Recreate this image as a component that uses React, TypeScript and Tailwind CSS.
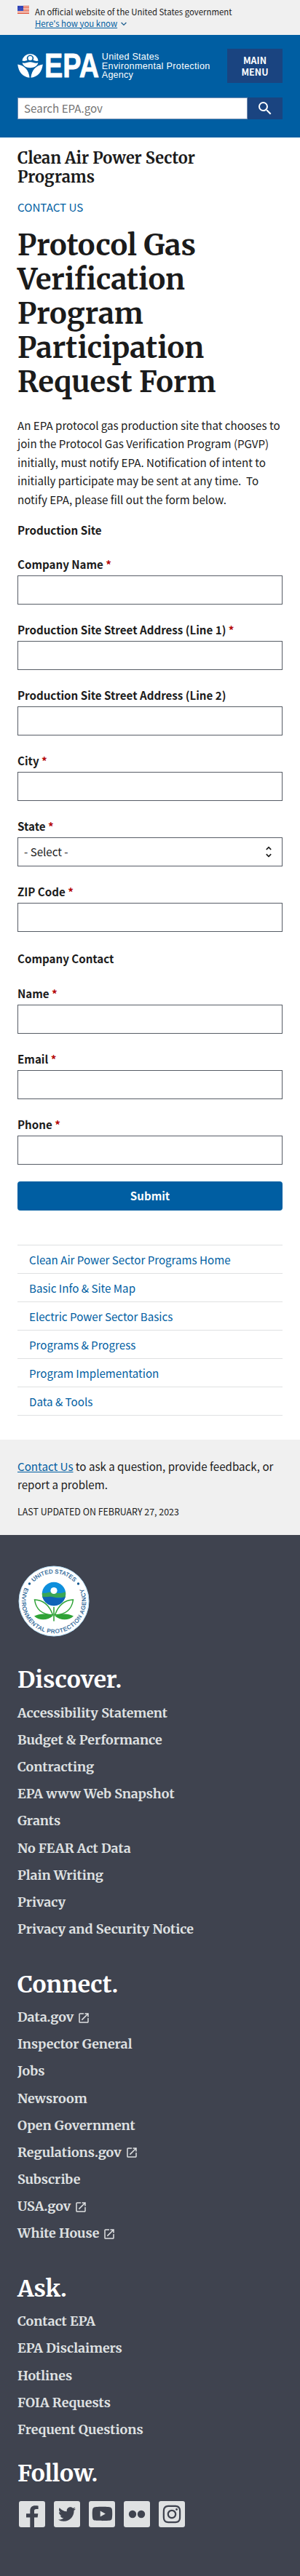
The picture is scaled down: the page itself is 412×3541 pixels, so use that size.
import type { ReactNode } from "react";
import { MdLaunch, MdSearch } from "react-icons/md";
import { FaInstagram, FaTwitter, FaYoutube } from "react-icons/fa";

const siteFields = ["Company Name", "Production Site Street Address (Line 1)", "Production Site Street Address (Line 2)", "City"];
const contactFields = ["Name", "Email", "Phone"];

const sections = [
  "Clean Air Power Sector Programs Home",
  "Basic Info & Site Map",
  "Electric Power Sector Basics",
  "Programs & Progress",
  "Program Implementation",
  "Data & Tools",
];

const discover = [
  "Accessibility Statement",
  "Budget & Performance",
  "Contracting",
  "EPA www Web Snapshot",
  "Grants",
  "No FEAR Act Data",
  "Plain Writing",
  "Privacy",
  "Privacy and Security Notice",
];
const connect = [
  "Data.gov",
  "Inspector General",
  "Jobs",
  "Newsroom",
  "Open Government",
  "Regulations.gov",
  "Subscribe",
  "USA.gov",
  "White House",
];
const external = ["Data.gov", "Regulations.gov", "USA.gov", "White House"];
const ask = ["Contact EPA", "EPA Disclaimers", "Hotlines", "FOIA Requests", "Frequent Questions"];

function Flag() {
  return (
    <svg width="16" height="11" viewBox="0 0 16 11" className="mt-2 block shrink-0">
      <rect width="16" height="11" fill="#fff" />
      {[0, 2, 4, 6, 8, 10].map((y) => (
        <rect key={y} y={y} width="16" height="1" fill="#db3e1f" />
      ))}
      <rect width="8" height="7" fill="#1e33b1" />
      {[1, 3, 5].map((y) =>
        [1, 3, 5, 7].map((x) => <circle key={`${x}-${y}`} cx={x - (y === 3 ? 0 : 0.2)} cy={y + 0.4} r="0.45" fill="#fff" />),
      )}
    </svg>
  );
}

function Logo() {
  return (
    <svg width="270" height="40" viewBox="24 70 270 40" className="block" fill="#fff">
      <path d="M30.4 83.6A11.2 11.2 0 0 1 52.6 83.6C49.5 84.6 47.5 83.4 45.4 82.6A4.6 4.6 0 1 0 37.6 82.6C35.4 84.2 33 84.4 30.4 83.6Z" />
      <circle cx="41.5" cy="80" r="3" />
      <path d="M30.6 86.3C35 87.6 38 85 41.6 85.2S48 87.4 52.4 86.3C51.2 91 46.8 93.2 41.5 93.2S31.8 91 30.6 86.3Z" />
      <path d="M24.2 88.4C33 89.6 39.6 95.6 40.6 106.8C31.6 105.6 25.6 99.6 24.2 88.4Z" />
      <path d="M58.8 88.4C50 89.6 43.4 95.6 42.4 106.8C51.4 105.6 57.4 99.6 58.8 88.4Z" />
      <text
        x="61"
        y="106.3"
        fontSize="46.5"
        fontWeight="700"
        textLength="75"
        lengthAdjust="spacingAndGlyphs"
        stroke="#fff"
        strokeWidth="0.8"
        fontFamily="'Liberation Sans', Arial, sans-serif"
      >
        EPA
      </text>
      <g fontSize="12.6" fontFamily="'Liberation Sans', Arial, sans-serif">
        <text x="139.8" y="82" textLength="78.5" lengthAdjust="spacing">United States</text>
        <text x="139.8" y="94.5" textLength="148.5" lengthAdjust="spacing">Environmental Protection</text>
        <text x="139.8" y="107" textLength="43" lengthAdjust="spacing">Agency</text>
      </g>
    </svg>
  );
}

function Seal() {
  return (
    <svg width="100" height="100" viewBox="0 0 100 100" className="block">
      <defs>
        <path id="seal-top" d="M11.7 50A38.3 38.3 0 0 1 88.3 50" />
        <path id="seal-bottom" d="M10.2 31.3A44 44 0 1 0 89.8 31.3" />
        <clipPath id="seal-disc">
          <circle cx="50" cy="40" r="16.2" />
        </clipPath>
      </defs>
      <circle cx="50" cy="50" r="48" fill="#fff" stroke="#b9e2fb" strokeWidth="1" />
      <g fill="#15588f" fontSize="7.8" fontFamily="'Liberation Sans', Arial, sans-serif" stroke="#15588f" strokeWidth="0.2">
        <text textAnchor="middle">
          <textPath href="#seal-top" startOffset="50%" textLength="62">UNITED STATES</textPath>
        </text>
        <text>
          <textPath href="#seal-bottom" textLength="175">ENVIRONMENTAL PROTECTION AGENCY</textPath>
        </text>
      </g>
      <circle cx="16.5" cy="26" r="1.7" fill="#15588f" />
      <circle cx="83.5" cy="26" r="1.7" fill="#15588f" />
      <g clipPath="url(#seal-disc)">
        <rect x="33" y="23" width="34" height="34" fill="#0e8fdc" />
        <path d="M33 38c6 3 10-2 17 0s11 1 17-1v8H33z" fill="#3aa655" />
        <path d="M33 43.5c6 2 10-1 17 1s11 1 17-1V58H33z" fill="#0f63b8" />
        <circle cx="50" cy="35.5" r="4.6" fill="#fff" />
      </g>
      <path d="M23.5 48C36 48.5 44 56 48.5 69C35 68.5 25.5 62 23.5 48Z" fill="#fff" stroke="#2fa336" strokeWidth="1.5" />
      <path d="M76.5 48C64 48.5 56 56 51.5 69C65 68.5 74.5 62 76.5 48Z" fill="#fff" stroke="#2fa336" strokeWidth="1.5" />
      <path d="M23 70.5C31 66.5 40 66.5 49 70C42 76 31 78 23 70.5Z" fill="#2fa336" />
      <path d="M77 70.5C69 66.5 60 66.5 51 70C58 76 69 78 77 70.5Z" fill="#2fa336" />
      <path d="M50 58V77.5" stroke="#2fa336" strokeWidth="1.6" />
    </svg>
  );
}

function Label({ text, required = true }: { text: string; required?: boolean }) {
  return (
    <label className="block h-[28px] leading-[24px] font-bold">
      {text} {required && <span className="text-[#b50909]">*</span>}
    </label>
  );
}

function Field({ text, required = true }: { text: string; required?: boolean }) {
  return (
    <div className="mt-[22px]">
      <Label text={text} required={required} />
      <input type="text" aria-label={text} className="block h-[40px] w-full border border-[#565c65] bg-white px-2 outline-none" />
    </div>
  );
}

function FooterList({ title, items }: { title: string; items: string[] }) {
  return (
    <section>
      <h2 className="pt-[0.6px] text-[31.8px] leading-[38px] font-bold text-white">{title}</h2>
      <ul className="pt-[7.4px]">
        {items.map((item) => (
          <li key={item} className="flex h-[37.2px] items-center text-[17.87px] leading-[37.2px] font-bold text-[#dfe1e2]">
            {item}
            {external.includes(item) && <MdLaunch className="mt-[2px] ml-[5px] size-[18px]" />}
          </li>
        ))}
      </ul>
    </section>
  );
}

function Social({ label, children }: { label: string; children: ReactNode }) {
  return (
    <a
      aria-label={label}
      className="flex size-[36px] items-center justify-center overflow-hidden rounded-[3px] bg-[#dfe1e2] text-[#3f434f]"
    >
      {children}
    </a>
  );
}

export default function App() {
  return (
    <div className="flex h-[3541px] w-full flex-col bg-white font-['Noto_Sans_CJK_SC','Noto_Sans',sans-serif] text-[15.13px] leading-[25.44px] text-[#1b1b1b]">
      <div className="flex h-[48px] shrink-0 gap-2 bg-[#f0f0f0] pl-6 text-[11.42px] leading-[16px]">
        <Flag />
        <div className="pt-[7.5px]">
          <p>An official website of the United States government</p>
          <p className="flex items-center text-[#005ea2]">
            <span className="underline">Here's how you know</span>
            <svg width="8" height="6" viewBox="0 0 8 6" className="mt-[2px] ml-[5px]" fill="none" stroke="#1f5f8f" strokeWidth="1.3">
              <path d="M0.6 1L4 4.4L7.4 1" />
            </svg>
          </p>
        </div>
      </div>

      <header className="flex h-[141px] shrink-0 flex-col bg-[#005ea2] px-6 pt-[19px]">
        <div className="flex h-[47px] justify-between">
          <div className="w-[270px] pt-[3px]">
            <Logo />
          </div>
          <button className="h-[47px] w-[76px] shrink-0 bg-[#1a4480] text-center text-[12.5px] leading-[16px] font-bold text-white">
            MAIN
            <br />
            MENU
          </button>
        </div>
        <div className="mt-[20px] flex h-[30px]">
          <div className="flex w-[316px] items-center border border-[#1a4480]/60 bg-white pl-[8px] text-[#757575]">Search EPA.gov</div>
          <button aria-label="Search" className="flex w-[48px] items-center justify-center bg-[#1a4480] text-white">
            <MdSearch className="size-[24px]" />
          </button>
        </div>
      </header>

      <main className="h-[1790px] shrink-0 px-6 pt-4">
        <h2 className="font-['Merriweather','DejaVu_Serif_Condensed',serif] text-[21.76px] leading-[26px] font-bold">
          Clean Air Power Sector
          <br />
          Programs
        </h2>
        <a className="mt-[15px] block leading-[24px] text-[#005ea2]">CONTACT US</a>
        <h1 className="mt-[18px] font-['Merriweather','DejaVu_Serif_Condensed',serif] text-[39.7px] leading-[47px] font-bold">
          Protocol Gas
          <br />
          Verification
          <br />
          Program
          <br />
          Participation
          <br />
          Request Form
        </h1>
        <p className="mt-[23px] whitespace-nowrap">
          An EPA protocol gas production site that chooses to
          <br />
          join the Protocol Gas Verification Program (PGVP)
          <br />
          initially, must notify EPA. Notification of intent to
          <br />
          initially participate may be sent at any time.&nbsp; To
          <br />
          notify EPA, please fill out the form below.
        </p>
        <form>
          <p className="mt-[16.4px] font-bold">Production Site</p>
          {siteFields.map((f) => (
            <Field key={f} text={f} required={!f.includes("Line 2")} />
          ))}
          <div className="mt-[22px]">
            <Label text="State" />
            <div className="flex h-[40px] items-center justify-between border border-[#565c65] pr-[14px] pl-[8px]">
              <span>- Select -</span>
              <svg width="8" height="16" viewBox="0 0 8 16" fill="none" stroke="#1b1b1b" strokeWidth="1.7">
                <path d="M0.8 4.8L4 1.7L7.2 4.8M0.8 11.2L4 14.3L7.2 11.2" />
              </svg>
            </div>
          </div>
          <Field text="ZIP Code" />
          <p className="mt-[24.2px] font-bold">Company Contact</p>
          {contactFields.map((f) => (
            <Field key={f} text={f} />
          ))}
          <button type="button" className="mt-[23.5px] block h-[39.5px] w-full rounded-[4px] bg-[#005ea2] text-center font-bold text-white">
            Submit
          </button>
        </form>
        <ul className="mt-[47.5px] border-b border-[#dfe1e2]">
          {sections.map((s) => (
            <li key={s} className="h-[39px] border-t border-[#dfe1e2] pl-4 leading-[38px] text-[#005ea2]">
              {s}
            </li>
          ))}
        </ul>
      </main>

      <div className="h-[131px] shrink-0 bg-[#f0f0f0] px-6 pt-[23.7px]">
        <p className="whitespace-nowrap">
          <a className="text-[#005ea2] underline">Contact Us</a> to ask a question, provide feedback, or
          <br />
          report a problem.
        </p>
        <p className="mt-[14px] text-[12.41px] leading-[20px]">LAST UPDATED ON FEBRUARY 27, 2023</p>
      </div>

      <footer className="flex-1 bg-[#3f434f] px-6 pt-[41px] font-['Merriweather','DejaVu_Serif_Condensed',serif]">
        <Seal />
        <div className="flex flex-col gap-[37.6px] pt-[38.7px]">
          <FooterList title="Discover." items={discover} />
          <FooterList title="Connect." items={connect} />
          <FooterList title="Ask." items={ask} />
        </div>
        <h2 className="mt-[23px] text-[31.8px] leading-[38px] font-bold text-white">Follow.</h2>
        <div className="mt-[18.6px] flex gap-3 pl-[2px]">
          <Social label="Facebook">
            <svg width="36" height="36" viewBox="0 0 36 36" fill="currentColor">
              <path d="M15.3 36V22.4H10V17.2H15.3V13.2C15.3 8.800 18 6.200 22.200 6.200C24.200 6.200 26 6.400 26.600 6.500V11H23.900C21.700 11 21 12.100 21 13.700V17.200H26.300L25.600 22.400H21V36Z" />
            </svg>
          </Social>
          <Social label="Twitter">
            <FaTwitter className="size-[24px]" />
          </Social>
          <Social label="YouTube">
            <FaYoutube className="size-[29px]" />
          </Social>
          <Social label="Flickr">
            <svg width="24" height="12" viewBox="0 0 24 12" fill="currentColor">
              <circle cx="6" cy="6" r="5.2" />
              <circle cx="18" cy="6" r="5.2" />
            </svg>
          </Social>
          <Social label="Instagram">
            <FaInstagram className="size-[28px]" />
          </Social>
        </div>
      </footer>
    </div>
  );
}
